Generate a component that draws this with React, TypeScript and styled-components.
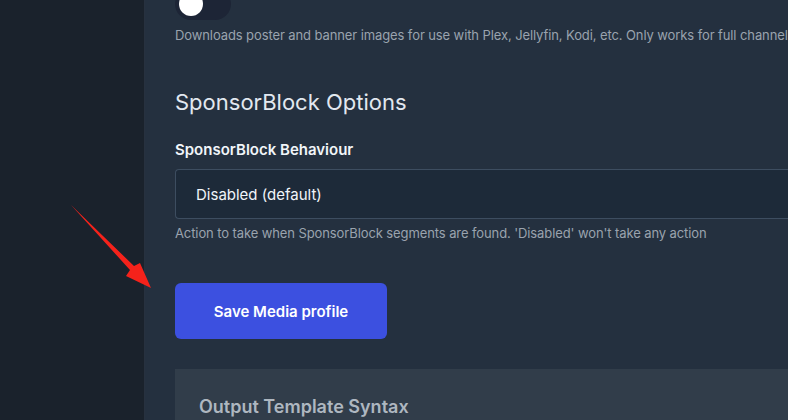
import { FC } from "react";
import styled, { createGlobalStyle } from "styled-components";

const GlobalStyle = createGlobalStyle`
  html, body {
    margin: 0;
    padding: 0;
    background: #1a222c;
    font-family: Inter, "Noto Sans", sans-serif;
    overflow: hidden;
  }
  * {
    box-sizing: border-box;
  }
`;

const Page = styled.div`
  position: relative;
  display: flex;
  width: 788px;
  height: 420px;
  overflow: hidden;
`;

const Sidebar = styled.aside`
  width: 144px;
  flex-shrink: 0;
  background: #1a222c;
`;

const Main = styled.main`
  flex: 1;
  min-width: 0;
  background: #24303f;
  border-left: 1px solid #27313f;
  padding: 0 0 0 30px;
  overflow: hidden;
`;

const Toggle = styled.div<{ $on?: boolean }>`
  position: relative;
  margin-top: -12px;
  width: 56px;
  height: 32px;
  border-radius: 16px;
  background: ${(p) => (p.$on ? "#3c50e0" : "#1d2536")};
  &::after {
    content: "";
    position: absolute;
    top: 4px;
    left: ${(p) => (p.$on ? "28px" : "4px")};
    width: 24px;
    height: 24px;
    border-radius: 50%;
    background: #ffffff;
  }
`;

const Hint = styled.p<{ $top?: number }>`
  margin: ${(p) => p.$top ?? 6}px 0 0;
  font-size: 13px;
  line-height: 18px;
  letter-spacing: -0.1px;
  color: #9aa3ae;
  white-space: nowrap;
`;

const SectionTitle = styled.h2`
  margin: 43px 0 0;
  font-size: 22px;
  font-weight: 400;
  line-height: 30px;
  color: #e2e8f0;
`;

const Label = styled.label`
  display: block;
  margin-top: 23px;
  font-size: 15px;
  font-weight: 600;
  line-height: 20px;
  color: #f1f5f9;
`;

const Select = styled.div`
  margin-top: 9px;
  width: 640px;
  height: 50px;
  display: flex;
  align-items: center;
  padding: 0 20px;
  background: #1d2a39;
  border: 1px solid #3d4d60;
  border-right: none;
  border-radius: 4px 0 0 4px;
  font-size: 15px;
  color: #f1f5f9;
`;

const SaveButton = styled.button`
  display: flex;
  align-items: center;
  justify-content: center;
  margin-top: 41px;
  width: 212px;
  height: 56px;
  border: none;
  border-radius: 6px;
  background: #3c50e0;
  color: #ffffff;
  font-family: inherit;
  font-size: 15px;
  font-weight: 600;
  cursor: pointer;
`;

const SyntaxBox = styled.section`
  margin-top: 30px;
  height: 80px;
  background: #313d4a;
  padding: 27px 24px;
`;

const SyntaxTitle = styled.h3`
  margin: 0;
  font-size: 18px;
  font-weight: 600;
  line-height: 22px;
  color: #aeb7c0;
`;

const Arrow = styled.svg`
  position: absolute;
  left: 0;
  top: 0;
  pointer-events: none;
`;

const App: FC = () => {
  return (
    <>
      <GlobalStyle />
      <Page>
        <Sidebar />
        <Main>
          <Toggle />
          <Hint>
            Downloads poster and banner images for use with Plex, Jellyfin,
            Kodi, etc. Only works for full channels
          </Hint>

          <SectionTitle>SponsorBlock Options</SectionTitle>
          <Label>SponsorBlock Behaviour</Label>
          <Select>Disabled (default)</Select>
          <Hint $top={5}>
            Action to take when SponsorBlock segments are found. 'Disabled'
            won't take any action
          </Hint>

          <SaveButton>Save Media profile</SaveButton>

          <SyntaxBox>
            <SyntaxTitle>Output Template Syntax</SyntaxTitle>
          </SyntaxBox>
        </Main>

        <Arrow width="788" height="420" viewBox="0 0 788 420">
          <polygon
            points="71,205 134,266 140,263 151,288 126,276 130,270"
            fill="#f5221b"
          />
        </Arrow>
      </Page>
    </>
  );
};

export default App;
